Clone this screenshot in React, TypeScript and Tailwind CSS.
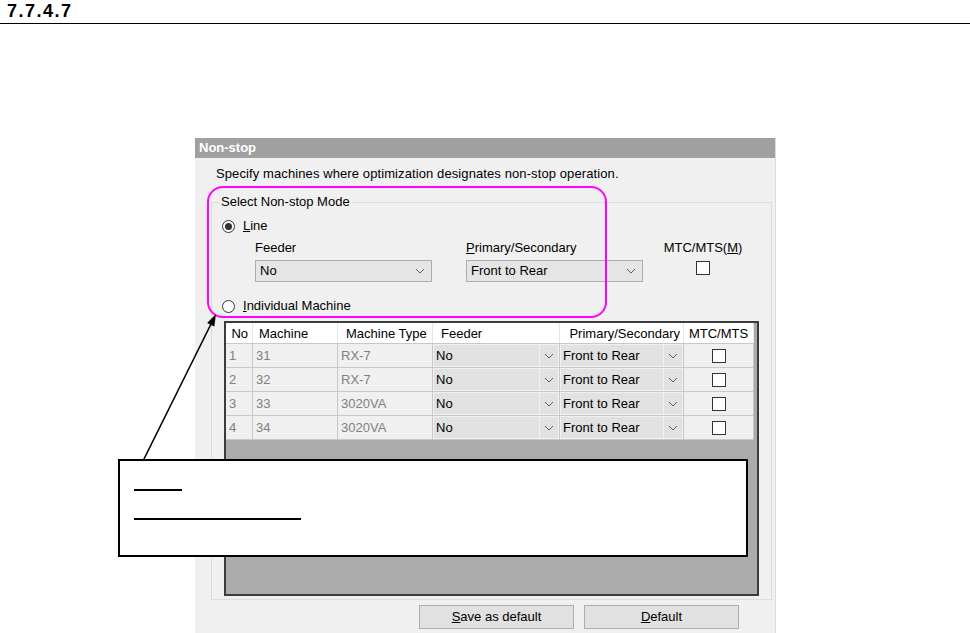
import React from "react";

const font = { fontFamily: '"Liberation Sans", Arial, sans-serif' };

function Chevron() {
  return (
    <svg width="10" height="6" viewBox="0 0 10 6" className="block">
      <polyline points="1,1 5,5 9,1" fill="none" stroke="#606060" strokeWidth="1" />
    </svg>
  );
}

function Radio({ checked, label, ul }: { checked: boolean; label: string; ul: string }) {
  return (
    <div className="flex items-center h-[14px]">
      <div className="w-[13px] h-[13px] rounded-full border border-[#333] bg-white flex items-center justify-center">
        {checked && <div className="w-[7px] h-[7px] rounded-full bg-[#333]" />}
      </div>
      <span className="ml-[8px] leading-[14px]">
        <span className="underline">{ul}</span>
        {label}
      </span>
    </div>
  );
}

function Select({ value }: { value: string }) {
  return (
    <div className="flex items-center h-[22px] w-[177px] bg-[#e5e5e5] border border-[#adadad]">
      <span className="flex-1 pl-[4px] leading-[14px]">{value}</span>
      <div className="w-[22px] flex justify-center">
        <Chevron />
      </div>
    </div>
  );
}

function Check() {
  return <div className="w-[14px] h-[14px] border border-[#333] bg-white" />;
}

const rows = [
  { no: "1", m: "31", t: "RX-7" },
  { no: "2", m: "32", t: "RX-7" },
  { no: "3", m: "33", t: "3020VA" },
  { no: "4", m: "34", t: "3020VA" },
];

function Table() {
  return (
    <div className="ml-[2px] mt-[8px] w-[535px] h-[275px] border-2 border-[#3c3c3c] bg-[#ababab] overflow-hidden">
      <div className="flex h-[21px] bg-white leading-[21px] border-b border-[#c8c8c8] w-[528px]">
        <div className="w-[27px] border-r border-[#e5e5e5] text-right pr-[4px]">No</div>
        <div className="w-[85px] border-r border-[#e5e5e5] pl-[6px]">Machine</div>
        <div className="w-[95px] border-r border-[#e5e5e5] pl-[8px]">Machine Type</div>
        <div className="w-[127px] border-r border-[#e5e5e5] pl-[8px]">Feeder</div>
        <div className="w-[124px] border-r border-[#e5e5e5] text-right pr-[3px]">Primary/Secondary</div>
        <div className="w-[70px] border-r border-[#e5e5e5] text-center">MTC/MTS</div>
      </div>
      {rows.map((r) => (
        <div key={r.no} className="flex h-[24px] leading-[23px] bg-[#f0f0f0] border-b border-[#c8c8c8] w-[528px]">
          <div className="w-[27px] border-r border-[#c8c8c8] pl-[3px] text-[#808080]">{r.no}</div>
          <div className="w-[85px] border-r border-[#c8c8c8] pl-[3px] text-[#808080]">{r.m}</div>
          <div className="w-[95px] border-r border-[#c8c8c8] pl-[3px] text-[#808080]">{r.t}</div>
          <div className="w-[127px] border-r border-[#c8c8c8] p-[1px]">
            <div className="flex h-full bg-[#e1e1e1]">
              <span className="flex-1 pl-[2px] leading-[21px]">No</span>
              <div className="w-[19px] border-l border-[#f0f0f0] flex items-center justify-center">
                <Chevron />
              </div>
            </div>
          </div>
          <div className="w-[124px] border-r border-[#c8c8c8] p-[1px]">
            <div className="flex h-full bg-[#e1e1e1]">
              <span className="flex-1 pl-[2px] leading-[21px]">Front to Rear</span>
              <div className="w-[19px] border-l border-[#f0f0f0] flex items-center justify-center">
                <Chevron />
              </div>
            </div>
          </div>
          <div className="w-[70px] border-r border-[#c8c8c8] flex items-center justify-center">
            <Check />
          </div>
        </div>
      ))}
    </div>
  );
}

export default function App() {
  return (
    <div className="relative w-[970px] h-[633px] overflow-hidden bg-white text-[13px] text-black" style={font}>
      <div className="h-[24px] border-b border-black pl-[7px] text-[18px] tracking-[1.5px] font-bold leading-[22px]">7.7.4.7</div>

      <div className="ml-[195px] mt-[114px] w-[581px] h-[495px] bg-[#f0f0f0] border-r border-[#dcdcdc]">
        <div className="h-[20px] bg-[#a0a0a0] pl-[4px] text-white font-bold leading-[20px]">Non-stop</div>
        <div className="pl-[21px] pt-[8px] leading-[15px] mb-[14px] tracking-[0.1px]">
          Specify machines where optimization designates non-stop operation.
        </div>
        <fieldset className="ml-[16px] w-[561px] h-[405px] border border-[#dcdcdc] pl-[10px]">
          <legend className="ml-[-3px] px-[2px] leading-[14px]">Select Non-stop Mode</legend>
          <div className="mt-[10px]">
            <Radio checked ul="L" label="ine" />
          </div>
          <div className="flex mt-[8px] pl-[33px]">
            <div className="w-[211px]">
              <div className="leading-[14px]">Feeder</div>
              <div className="mt-[5px]">
                <Select value="No" />
              </div>
            </div>
            <div className="w-[192px]">
              <div className="leading-[14px]">
                <span className="underline">P</span>rimary/Secondary
              </div>
              <div className="mt-[5px]">
                <Select value="Front to Rear" />
              </div>
            </div>
            <div className="flex flex-col items-center w-[90px]">
              <div className="leading-[14px]">
                MTC/MTS(<span className="underline">M</span>)
              </div>
              <div className="mt-[6px]">
                <Check />
              </div>
            </div>
          </div>
          <div className="mt-[17px]">
            <Radio checked={false} ul="I" label="ndividual Machine" />
          </div>
          <Table />
        </fieldset>
        <div className="flex gap-[10px] ml-[224px] mt-[5px]">
          <button className="w-[155px] h-[24px] bg-[#e1e1e1] border border-[#adadad]">
            <span className="underline">S</span>ave as default
          </button>
          <button className="w-[155px] h-[24px] bg-[#e1e1e1] border border-[#adadad]">
            <span className="underline">D</span>efault
          </button>
        </div>
      </div>

      {/* highlight around the mode selection */}
      <div className="absolute left-[207px] top-[186px] w-[400px] h-[132px] border-2 border-[#ff00ff] rounded-[16px]" />

      {/* callout box */}
      <div className="absolute left-[118px] top-[459px] w-[630px] h-[98px] border-2 border-black bg-white pl-[14px] pt-[28px]">
        <div className="w-[48px] h-[2px] bg-black" />
        <div className="mt-[27px] w-[167px] h-[2px] bg-black" />
      </div>

      {/* arrow */}
      <svg className="absolute left-[135px] top-[310px]" width="90" height="155" viewBox="0 0 90 155">
        <line x1="8" y1="151" x2="78" y2="10" stroke="black" strokeWidth="1.6" />
        <polygon points="81,4 79.3,16.5 72.1,13" fill="black" />
      </svg>
    </div>
  );
}
